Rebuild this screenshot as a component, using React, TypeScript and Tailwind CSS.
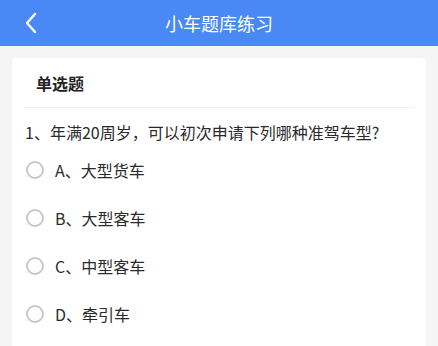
const options = ["A、大型货车", "B、大型客车", "C、中型客车", "D、牵引车"]

export default function App() {
    return (
        <div className="w-[438px] h-[346px] overflow-hidden bg-[#f5f5f5]"
             style={{fontFamily: '"Noto Sans CJK SC", "Noto Sans", sans-serif'}}>
            <div className="relative h-[46px] bg-[#4a89f5] flex items-center justify-center">
                <svg className="absolute left-[24px] top-[12px]" width="14" height="22" viewBox="0 0 14 22" fill="none">
                    <path d="M11 2 L3 11 L11 20" stroke="white" strokeWidth="2.4" strokeLinecap="round" strokeLinejoin="round"/>
                </svg>
                <span className="text-white text-[18px] leading-none">小车题库练习</span>
            </div>
            <div className="mx-[12px] mt-[12px] bg-white rounded-[4px] h-[296px]">
                <div className="h-[50px] mx-[12px] flex items-center border-b border-[#f0f0f0] pl-[12px]">
                    <span className="text-[16px] font-bold text-[#222]">单选题</span>
                </div>
                <div className="px-[13px] pt-[12px] text-[16px] text-[#2a2a2a] leading-[24px]">
                    1、年满20周岁，可以初次申请下列哪种准驾车型?
                </div>
                <div className="flex flex-col px-[14px] pt-[2px]">
                    {options.map((o) => (
                        <div key={o} className="h-[48px] flex items-center gap-[11px]">
                            <div className="w-[18px] h-[18px] rounded-full border-2 border-[#c8c8c8]"/>
                            <span className="text-[16px] text-[#2a2a2a]">{o}</span>
                        </div>
                    ))}
                </div>
            </div>
        </div>
    )
}
